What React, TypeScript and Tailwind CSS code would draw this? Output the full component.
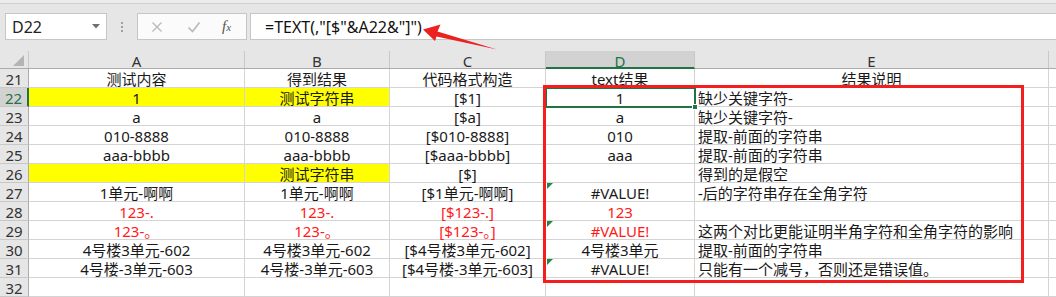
import React from "react";

type Row = {
  n: number;
  a?: string;
  b?: string;
  c?: string;
  d?: string;
  e?: string;
  yellow?: boolean;
  red?: boolean;
  dRed?: boolean;
  tri?: boolean;
  eCenter?: boolean;
};

const rows: Row[] = [
  { n: 21, a: "测试内容", b: "得到结果", c: "代码格式构造", d: "text结果", e: "结果说明", eCenter: true },
  { n: 22, a: "1", b: "测试字符串", c: "[$1]", d: "1", e: "缺少关键字符-", yellow: true },
  { n: 23, a: "a", b: "a", c: "[$a]", d: "a", e: "缺少关键字符-" },
  { n: 24, a: "010-8888", b: "010-8888", c: "[$010-8888]", d: "010", e: "提取-前面的字符串" },
  { n: 25, a: "aaa-bbbb", b: "aaa-bbbb", c: "[$aaa-bbbb]", d: "aaa", e: "提取-前面的字符串" },
  { n: 26, a: "", b: "测试字符串", c: "[$]", d: "", e: "得到的是假空", yellow: true },
  { n: 27, a: "1单元-啊啊", b: "1单元-啊啊", c: "[$1单元-啊啊]", d: "#VALUE!", e: "-后的字符串存在全角字符", tri: true },
  { n: 28, a: "123-.", b: "123-.", c: "[$123-.]", d: "123", e: "", red: true, dRed: true },
  { n: 29, a: "123-。", b: "123-。", c: "[$123-。]", d: "#VALUE!", e: "这两个对比更能证明半角字符和全角字符的影响", red: true, dRed: true, tri: true },
  { n: 30, a: "4号楼3单元-602", b: "4号楼3单元-602", c: "[$4号楼3单元-602]", d: "4号楼3单元", e: "提取-前面的字符串" },
  { n: 31, a: "4号楼-3单元-603", b: "4号楼-3单元-603", c: "[$4号楼-3单元-603]", d: "#VALUE!", e: "只能有一个减号，否则还是错误值。", tri: true },
  { n: 32 },
];

const cell =
  "h-[19px] shrink-0 border-r border-b border-[#d4d4d4] flex items-center justify-center pt-[2px] leading-[16px] whitespace-nowrap overflow-visible";

export default function App() {
  return (
    <div className="relative w-[1056px] h-[297px] overflow-hidden bg-[#e6e6e6] font-['Noto_Sans','Noto_Sans_CJK_SC',sans-serif] text-[15px] text-[#1a1a1a]">
      {/* top strip */}
      <div className="h-[3px] bg-[#ececec]" />
      <div className="h-px bg-[#d0d0d0]" />
      <div className="h-[9px] bg-[#e6e6e6]" />

      {/* formula bar row */}
      <div className="h-[27px] flex pl-[5px]">
        <div className="w-[102px] h-full bg-white border border-[#c6c6c6] flex items-center pl-[6px] pr-[6px] justify-between">
          <span className="text-[16px] text-[#222] leading-none pt-[1px]">D22</span>
          <svg width="8" height="5" viewBox="0 0 8 5">
            <polygon points="0,0 8,0 4,4.5" fill="#707070" />
          </svg>
        </div>
        <div className="w-[30px] flex flex-col items-center justify-center gap-[2px]">
          <div className="w-[2px] h-[2px] bg-[#a0a0a0]" />
          <div className="w-[2px] h-[2px] bg-[#a0a0a0]" />
          <div className="w-[2px] h-[2px] bg-[#a0a0a0]" />
        </div>
        <div className="w-[110px] h-full bg-[#fbfbfb] border border-[#c6c6c6] flex items-center">
          <svg width="12" height="12" viewBox="0 0 12 12" className="ml-[13px] shrink-0">
            <path d="M1.5 1.5 L10.5 10.5 M10.5 1.5 L1.5 10.5" stroke="#b8b8b8" strokeWidth="1.3" fill="none" />
          </svg>
          <svg width="14" height="12" viewBox="0 0 14 12" className="ml-[24px] shrink-0">
            <path d="M1.5 6.5 L5.5 10.5 L12.5 1.5" stroke="#b8b8b8" strokeWidth="1.6" fill="none" />
          </svg>
          <span className="ml-[21px] font-['Liberation_Serif',serif] italic text-[15px] text-[#555] leading-none">
            f<span className="text-[11px]">x</span>
          </span>
        </div>
        <div className="w-[3px]" />
        <div className="flex-1 h-full bg-white border-y border-l border-[#c6c6c6] flex items-center pl-[14px]">
          <span className="text-[16px] text-[#111] leading-none pt-[1px]">=TEXT(,"[$"&amp;A22&amp;"]")</span>
        </div>
      </div>

      <div className="h-[11px]" />

      {/* column headers */}
      <div className="h-[18px] flex border-b border-[#ababab] text-[15px] text-[#333]">
        <div className="w-[29px] shrink-0 h-full border-r border-[#c8c8c8] relative">
          <svg width="11" height="11" viewBox="0 0 11 11" className="absolute right-[4px] bottom-[2px]">
            <polygon points="11,0 11,11 0,11" fill="#b4b4b4" />
          </svg>
        </div>
        <div className="w-[216px] shrink-0 h-full border-r border-[#c8c8c8] flex items-center justify-center pt-[3px] leading-[14px]">A</div>
        <div className="w-[145px] shrink-0 h-full border-r border-[#c8c8c8] flex items-center justify-center pt-[3px] leading-[14px]">B</div>
        <div className="w-[156px] shrink-0 h-full border-r border-[#c8c8c8] flex items-center justify-center pt-[3px] leading-[14px]">C</div>
        <div className="w-[149px] shrink-0 h-[calc(100%+1px)] -mb-px bg-[#d2d2d2] border-r border-[#c8c8c8] border-b-2 border-b-[#217346] flex items-center justify-center pt-[3px] leading-[14px] text-[#217346]">D</div>
        <div className="w-[354px] shrink-0 h-full border-r border-[#c8c8c8] flex items-center justify-center pt-[3px] leading-[14px]">E</div>
        <div className="flex-1 h-full" />
      </div>

      {/* grid */}
      <div className="bg-white">
        {rows.map((r) => {
          const txt = r.red ? "text-[#ff1a1a]" : "text-[#1a1a1a]";
          const y = r.yellow ? "bg-[#ffff00]" : "bg-white";
          const sel = r.n === 22;
          return (
            <div key={r.n} className="flex h-[19px]">
              <div
                className={
                  "w-[29px] shrink-0 h-[19px] border-b flex items-center justify-center pt-[2px] leading-[15px] text-[15px] " +
                  (sel
                    ? "bg-[#d2d2d2] border-b-[#c8c8c8] border-r-2 border-r-[#217346] text-[#217346]"
                    : "bg-[#e6e6e6] border-b-[#c8c8c8] border-r border-r-[#ababab] text-[#333]")
                }
              >
                {r.n}
              </div>
              <div className={`w-[216px] ${cell} ${y} ${txt}`}>{r.a}</div>
              <div className={`w-[145px] ${cell} ${y} ${txt}`}>{r.b}</div>
              <div className={`w-[156px] ${cell} bg-white ${txt}`}>{r.c}</div>
              <div className={`w-[149px] ${cell} bg-white relative ${r.dRed ? "text-[#ff1a1a]" : "text-[#1a1a1a]"}`}>
                {r.tri && (
                  <svg width="6" height="6" viewBox="0 0 6 6" className="absolute left-px top-0">
                    <polygon points="0,0 6,0 0,6" fill="#1f8a3c" />
                  </svg>
                )}
                {r.d}
              </div>
              <div
                className={`w-[354px] ${cell} bg-white text-[#1a1a1a] ${r.eCenter ? "justify-center" : "justify-start pl-[3px]"}`}
              >
                {r.e}
              </div>
              <div className="flex-1 h-[19px] border-b border-[#d4d4d4] bg-white" />
            </div>
          );
        })}
      </div>

      {/* selected cell border D22 */}
      <div className="absolute left-[545px] top-[87px] w-[151px] h-[21px] border-2 border-[#217346]" />
      <div className="absolute left-[692px] top-[104px] w-[6px] h-[6px] bg-[#217346] border border-white" />

      {/* red highlight rectangle */}
      <div className="absolute left-[543px] top-[85px] w-[481px] h-[198px] border-[3px] border-[#f41e1e]" />

      {/* red arrow */}
      <svg width="84" height="34" viewBox="0 0 84 34" className="absolute left-[418px] top-[20px]">
        <polygon points="5,9.5 22.5,4.5 19.5,11.5 79,29.5 18.5,16.5 17,21" fill="#ec2220" />
      </svg>
    </div>
  );
}
